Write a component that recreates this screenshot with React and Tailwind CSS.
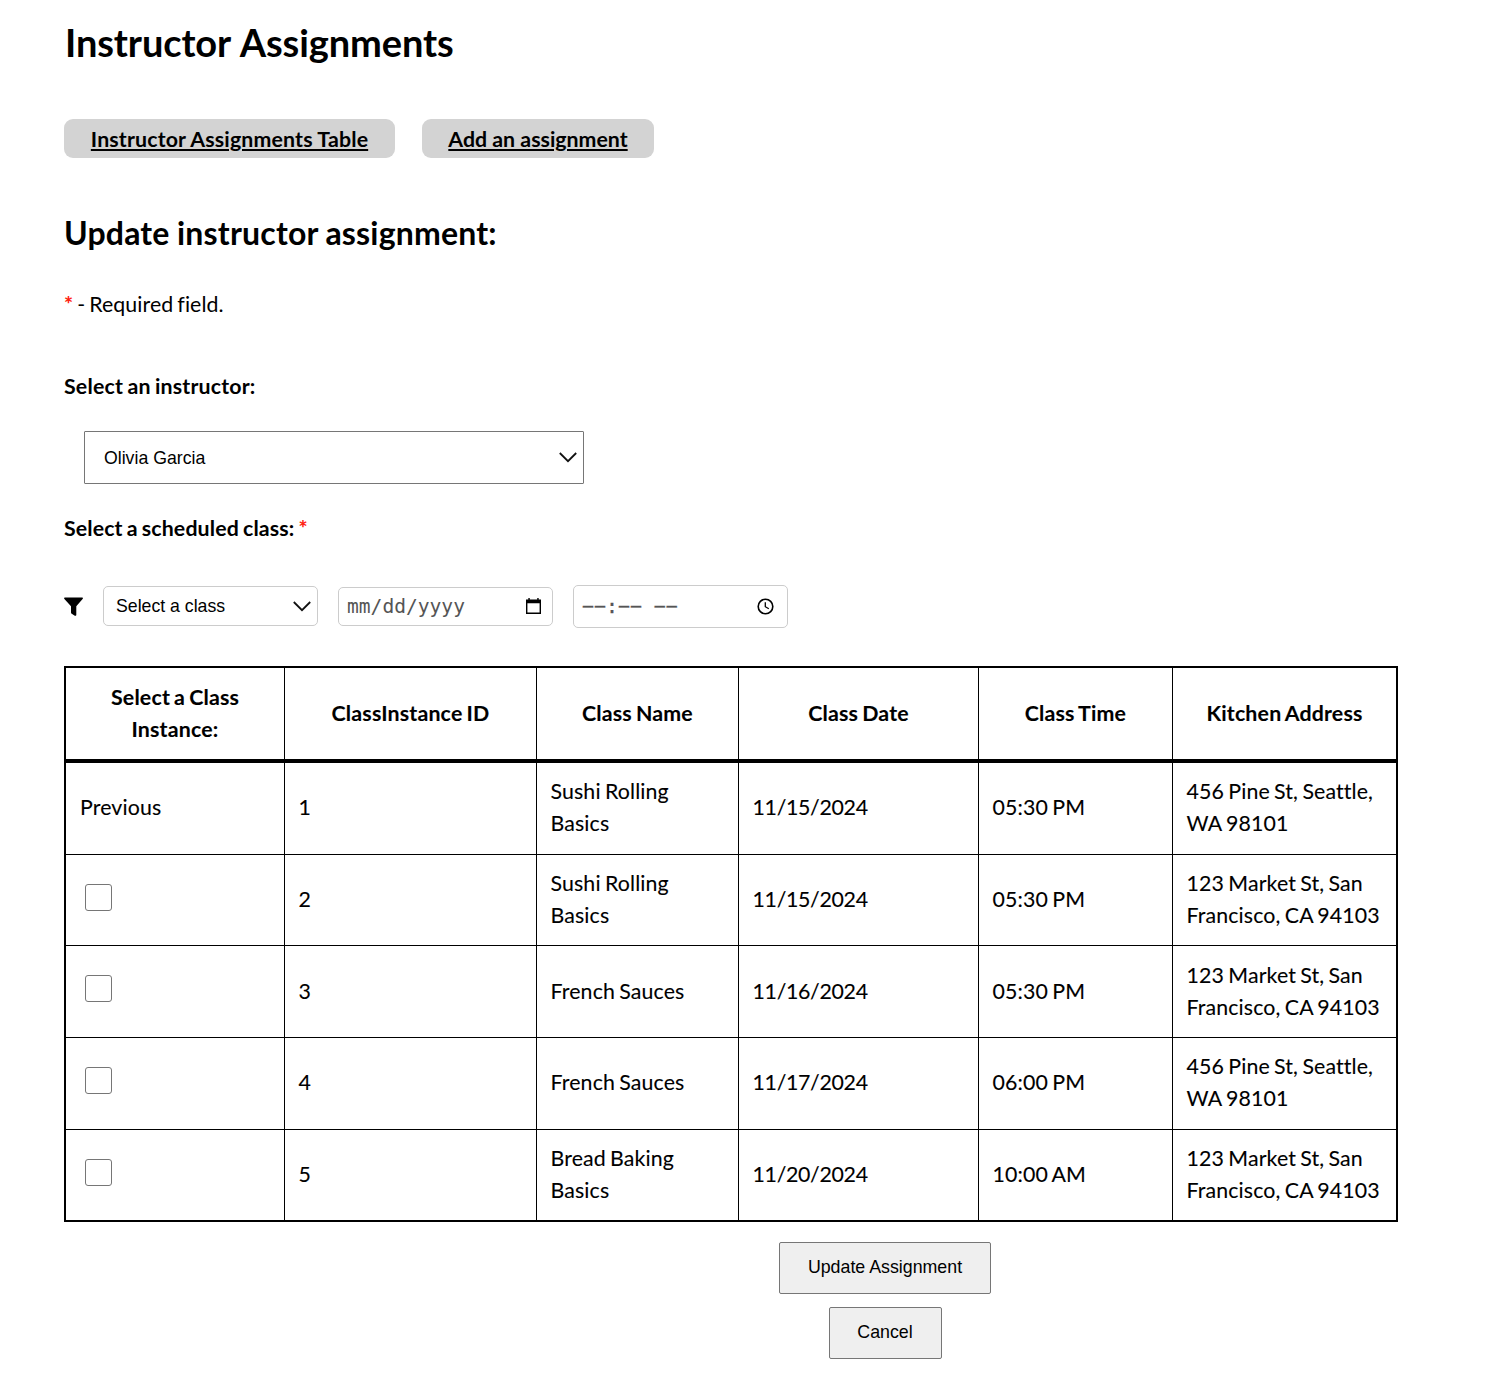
import React from "react";

const columns = [
  { label: "ClassInstance ID" },
  { label: "Class Name" },
  { label: "Class Date" },
  { label: "Class Time" },
];

const pine = ["456 Pine St, Seattle,", "WA 98101"];
const market = ["123 Market St, San", "Francisco, CA 94103"];

const rows = [
  { id: "1", name: ["Sushi Rolling", "Basics"], date: "11/15/2024", time: "05:30 PM", address: pine, height: "h-[92px]", pad: "pb-[4px]", previous: true },
  { id: "2", name: ["Sushi Rolling", "Basics"], date: "11/15/2024", time: "05:30 PM", address: market, height: "h-[91px]", pad: "pb-[2px]" },
  { id: "3", name: ["French Sauces"], date: "11/16/2024", time: "05:30 PM", address: market, height: "h-[92px]", pad: "pb-[2px]" },
  { id: "4", name: ["French Sauces"], date: "11/17/2024", time: "06:00 PM", address: pine, height: "h-[92px]", pad: "pb-[4px]" },
  { id: "5", name: ["Bread Baking", "Basics"], date: "11/20/2024", time: "10:00 AM", address: market, height: "h-[92px]", pad: "pb-[2px]", last: true },
];

function Chevron({ className }) {
  return (
    <svg className={className} width="18" height="11" viewBox="0 0 18 11" fill="none" stroke="#111" strokeWidth="1.8">
      <path d="M0.8 1 L9 9.2 L17.2 1" />
    </svg>
  );
}

function Lines({ lines }) {
  return lines.map((line) => (
    <span key={line} className="block whitespace-nowrap">
      {line}
    </span>
  ));
}

function Row({ row }) {
  const line = row.last ? "border-b-2" : "border-b";
  const cell = `border-r border-black pl-[13.5px] ${row.pad} ${line}`;
  return (
    <tr className={row.height}>
      <td className={`border-l-2 border-r border-black pl-[14px] ${row.previous ? row.pad : "pb-[2px]"} ${line}`}>
        {row.previous ? (
          "Previous"
        ) : (
          <input
            type="checkbox"
            className="relative -top-[2px] ml-[5px] block size-[27px] appearance-none rounded-[3px] border border-[#767676] bg-white"
          />
        )}
      </td>
      <td className={cell}>{row.id}</td>
      <td className={cell}>
        <Lines lines={row.name} />
      </td>
      <td className={`${cell} tracking-[-0.3px]`}>{row.date}</td>
      <td className={cell}>{row.time}</td>
      <td className={`border-r-2 border-black pl-[13.5px] ${row.pad} ${line}`}>
        <Lines lines={row.address} />
      </td>
    </tr>
  );
}

export default function App() {
  return (
    <main className="h-[1376px] w-[1496px] overflow-hidden bg-white pl-16 font-[Lato,sans-serif] text-[21.333px] leading-8 text-black">
      <h1 className="pt-[13px] pl-px text-[38px] leading-[58px] font-bold tracking-[-0.1px] [word-spacing:1.5px]">Instructor Assignments</h1>

      <nav className="mt-[48px] flex gap-[27px]">
        <a href="#table" className="h-[39px] w-[331px] rounded-[9px] bg-[#d3d3d3] text-center leading-[40px] font-bold tracking-[0.15px] underline">
          Instructor Assignments Table
        </a>
        <a href="#add" className="h-[39px] w-[232px] rounded-[9px] bg-[#d3d3d3] text-center leading-[40px] font-bold underline">
          Add an assignment
        </a>
      </nav>

      <h2 className="mt-[51px] text-[32px] leading-[48px] font-bold tracking-[0.19px] [word-spacing:-0.5px]">Update instructor assignment:</h2>
      <p className="mt-[31px] tracking-[0.08px] [word-spacing:-1.5px] [font-variant-ligatures:common-ligatures]">
        <span className="font-black text-[#ff2211]">*</span> - Required field.
      </p>

      <p className="mt-[50px] font-bold tracking-[0.18px] [word-spacing:-1px]">Select an instructor:</p>
      <button className="mt-[29px] ml-5 flex h-[53px] w-[500px] items-center justify-between rounded-[1px] border border-[#767676] pr-[6px] pl-[19px] font-['Liberation_Sans',sans-serif] text-[17.7px]">
        Olivia Garcia
        <Chevron />
      </button>
      <p className="mt-7 font-bold tracking-[0.12px] [word-spacing:-1.2px]">
        Select a scheduled class: <span className="font-black text-[#ff2211]">*</span>
      </p>

      <div className="mt-[41px] flex h-[43px] items-center">
        <svg width="20" height="20" viewBox="0 0 20 20" fill="#000">
          <path d="M0.8 0.5 H18.2 Q19.5 0.7 18.6 2 L12.3 9.2 V18 Q12 19.2 10.8 18.7 L7.7 16.8 Q7 16.3 7 15.5 V9.2 L0.4 2 Q-0.3 0.7 0.8 0.5 Z" />
        </svg>
        <button className="mb-[2px] ml-[19px] flex h-10 w-[215px] items-center justify-between rounded-[5px] border border-[#ccc] pr-[6px] pl-[12px] font-['Liberation_Sans',sans-serif] text-[17.7px]">
          Select a class
          <Chevron className="mt-px" />
        </button>
        <div className="ml-5 flex h-[39px] w-[215px] items-center justify-between rounded-[5px] border border-[#ccc] pr-[11px] pl-[8px] font-['DejaVu_Sans_Mono',monospace] text-[19.6px] text-[#555]">
          <span>mm/dd/yyyy</span>
          <svg width="15" height="17" viewBox="0 0 16 18" fill="none">
            <path d="M0 1.5 H2.5 V0 H4 V1.5 H12 V0 H13.5 V1.5 H16 V17 H0 Z M1.5 5.5 V15.5 H14.5 V5.5 Z" fill="#000" fillRule="evenodd" />
          </svg>
        </div>
        <div className="ml-5 flex h-[43px] w-[215px] items-center justify-between rounded-[5px] border border-[#ccc] pr-[13px] pl-[8px] font-['DejaVu_Sans_Mono',monospace] text-[19.9px] text-[#555]">
          <span className="[-webkit-text-stroke:0.3px_#555]">−−:−− −−</span>
          <svg width="17" height="17" viewBox="0 0 17 17" fill="none" stroke="#000">
            <circle cx="8.5" cy="8.5" r="7.3" strokeWidth="1.6" />
            <path d="M8.3 4.2 V8.7 L11.8 10.8" strokeWidth="1.3" />
          </svg>
        </div>
      </div>

      <table className="mt-[38px] w-[1334px] table-fixed border-separate border-spacing-0 tracking-[0.13px] [font-variant-ligatures:none] [word-spacing:-1.3px] [-webkit-text-stroke:0.1px_#000]">
        <colgroup>
          <col className="w-[221px]" />
          <col className="w-[252px]" />
          <col className="w-[202px]" />
          <col className="w-[240px]" />
          <col className="w-[194px]" />
          <col className="w-[225px]" />
        </colgroup>
        <thead>
          <tr className="h-[97px] tracking-[0.18px]">
            <th className="border-t-2 border-r border-b-4 border-l-2 border-black pb-[2px]">
              <Lines lines={["Select a Class", "Instance:"]} />
            </th>
            {columns.map((column) => (
              <th key={column.label} className="border-t-2 border-r border-b-4 border-black pb-[2px]">
                {column.label}
              </th>
            ))}
            <th className="border-t-2 border-r-2 border-b-4 border-black pb-[2px]">Kitchen Address</th>
          </tr>
        </thead>
        <tbody>
          {rows.map((row) => (
            <Row key={row.id} row={row} />
          ))}
        </tbody>
      </table>

      <div className="mt-5 ml-[715px] flex w-[212px] flex-col items-center gap-[13px] font-['Liberation_Sans',sans-serif] text-[17.8px]">
        <button className="h-[52px] w-[212px] rounded-[2px] border border-[#767676] bg-[#efefef] pb-[2px]">Update Assignment</button>
        <button className="h-[52px] w-[113px] rounded-[2px] border border-[#767676] bg-[#efefef] pb-[2px]">Cancel</button>
      </div>
    </main>
  );
}
